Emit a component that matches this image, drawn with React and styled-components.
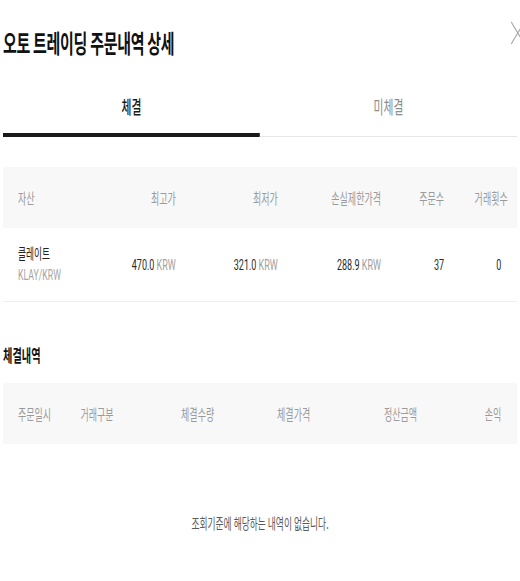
import React, { useState } from 'react'
import styled, { createGlobalStyle } from 'styled-components'

// the reference is squeezed sideways, so the page is laid out wide and scaled on x
const SQUEEZE = 0.6

const GlobalStyle = createGlobalStyle`
    html, body {
        margin: 0;
        padding: 0;
        overflow: hidden;
        background: #fff;
    }
    body {
        font-family: Roboto, "Noto Sans CJK KR", "Noto Sans", sans-serif;
        color: #222;
    }
`

const summaryCols = '160px 154px 170px 172px 105px 1fr'
const historyCols = '104px 116px 158px 160px 178px 1fr'

const summary = {
    name: '클레이트',
    market: 'KLAY/KRW',
    high: '470.0',
    low: '321.0',
    stopLoss: '288.9',
    orders: '37',
    trades: '0',
}

const App = () => {
    const [tab, setTab] = useState(0)

    return (
        <>
            <GlobalStyle />
            <Page>
                <Header>
                    <Title>오토 트레이딩 주문내역 상세</Title>
                    <Close aria-label="닫기">
                        <svg width="24" height="24" viewBox="0 0 24 24">
                            <path d="M1 1 L23 23 M23 1 L1 23" stroke="#a8a8a8" strokeWidth="1.6" fill="none" />
                        </svg>
                    </Close>
                </Header>

                <Tabs>
                    {['체결', '미체결'].map((label, i) => (
                        <Tab key={label} $active={tab === i} onClick={() => setTab(i)}>
                            {label}
                        </Tab>
                    ))}
                </Tabs>

                <Table $top={30}>
                    <HeadRow $cols={summaryCols}>
                        <Cell>자산</Cell>
                        <Cell $right>최고가</Cell>
                        <Cell $right>최저가</Cell>
                        <Cell $right>손실제한가격</Cell>
                        <Cell $right>주문수</Cell>
                        <Cell $right>거래횟수</Cell>
                    </HeadRow>
                    <BodyRow $cols={summaryCols}>
                        <Cell>
                            <AssetName>{summary.name}</AssetName>
                            <Market>{summary.market}</Market>
                        </Cell>
                        <Cell $right>{summary.high} <Unit>KRW</Unit></Cell>
                        <Cell $right>{summary.low} <Unit>KRW</Unit></Cell>
                        <Cell $right>{summary.stopLoss} <Unit>KRW</Unit></Cell>
                        <Cell $right>{summary.orders}</Cell>
                        <Cell $right>{summary.trades}</Cell>
                    </BodyRow>
                </Table>

                <SectionTitle>체결내역</SectionTitle>

                <Table $top={16}>
                    <HeadRow $cols={historyCols}>
                        <Cell>주문일시</Cell>
                        <Cell>거래구분</Cell>
                        <Cell $right>체결수량</Cell>
                        <Cell $right>체결가격</Cell>
                        <Cell $right>정산금액</Cell>
                        <Cell $right>손익</Cell>
                    </HeadRow>
                </Table>

                <Empty>조회기준에 해당하는 내역이 없습니다.</Empty>
            </Page>
        </>
    )
}

export default App

const Page = styled.div`
    width: ${520 / SQUEEZE}px;
    box-sizing: border-box;
    padding: 0 5px;
    transform: scaleX(${SQUEEZE});
    transform-origin: 0 0;
`
const Header = styled.div`
    display: flex;
    justify-content: space-between;
    align-items: center;
    height: 84px;
`
const Title = styled.h1`
    margin: 0;
    font-family: "Noto Sans CJK KR", sans-serif;
    font-size: 25px;
    font-weight: 700;
    line-height: 32px;
    color: #111;
    letter-spacing: -0.5px;
`
const Close = styled.button`
    align-self: flex-start;
    margin: 21px -13px 0 0;
    padding: 0;
    border: 0;
    background: none;
    width: 24px;
    height: 24px;
    display: flex;
`
const Tabs = styled.div`
    display: flex;
`
const Tab = styled.div`
    flex: 1;
    text-align: center;
    font-family: "Noto Sans CJK KR", sans-serif;
    font-size: 18px;
    line-height: 26px;
    padding-top: 9px;
    padding-bottom: ${p => (p.$active ? 14 : 17)}px;
    font-weight: ${p => (p.$active ? 500 : 400)};
    color: ${p => (p.$active ? '#1a1a1a' : '#8c8c8c')};
    border-bottom: ${p => (p.$active ? '4px solid #1b1b1b' : '1px solid #e6e6e6')};
    cursor: pointer;
`
const Table = styled.div`
    margin-top: ${p => p.$top}px;
`
const HeadRow = styled.div`
    display: grid;
    grid-template-columns: ${p => p.$cols};
    align-items: center;
    height: 61px;
    background: #f8f8f8;
    font-family: "Noto Sans CJK KR", sans-serif;
    font-size: 15px;
    color: #9a9a9a;
`
const BodyRow = styled.div`
    display: grid;
    grid-template-columns: ${p => p.$cols};
    align-items: center;
    height: 73px;
    border-bottom: 1px solid #eeeeee;
    font-size: 15px;
    color: #2a2a2a;
`
const Cell = styled.div`
    padding: 0 26px 0 25px;
    text-align: ${p => (p.$right ? 'right' : 'left')};
    white-space: nowrap;
`
const AssetName = styled.div`
    font-family: "Noto Sans CJK KR", sans-serif;
    font-size: 14.5px;
    line-height: 22px;
    color: #222;
`
const Market = styled.div`
    font-size: 14.5px;
    line-height: 22px;
    color: #a5a5a5;
    margin-top: 1px;
`
const Unit = styled.span`
    color: #a0a0a0;
`
const SectionTitle = styled.h2`
    margin: 41px 0 0;
    font-family: "Noto Sans CJK KR", sans-serif;
    font-size: 17px;
    font-weight: 700;
    line-height: 24px;
    color: #111;
`
const Empty = styled.p`
    margin: 0;
    padding-top: 69px;
    text-align: center;
    font-family: "Noto Sans CJK KR", sans-serif;
    font-size: 14.6px;
    line-height: 20px;
    color: #5a5a5a;
`
